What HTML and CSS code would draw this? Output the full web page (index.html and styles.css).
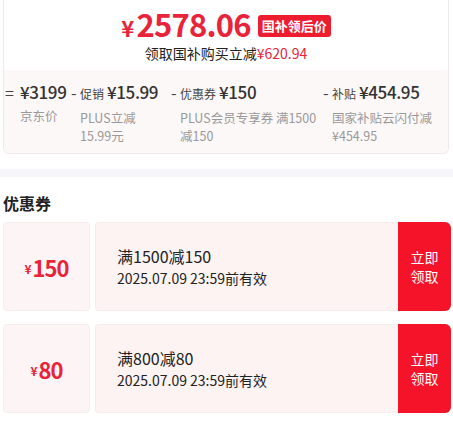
FILE: index.html
```html
<!DOCTYPE html>
<html lang="zh-CN">
<head>
  <meta charset="UTF-8" />
  <meta name="viewport" content="width=device-width, initial-scale=1" />
  <title>优惠券</title>
  <link rel="stylesheet" href="styles.css">
</head>
<body>

<div class="price-card">
  <div class="price-main">
    <span class="price-now"><span class="yen">¥</span>2578.06</span>
    <span class="price-tag">国补领后价</span>
  </div>
  <div class="price-save">领取国补购买立减<span class="red">¥620.94</span></div>

  <div class="breakdown">
    <div class="bd-item bd-1">
      <span class="bd-sign">=</span>
      <div class="bd-body">
        <div class="bd-top"><span class="bd-num">¥3199</span></div>
        <div class="bd-desc">京东价</div>
      </div>
    </div>
    <div class="bd-item bd-2">
      <span class="bd-sign">-</span>
      <div class="bd-body">
        <div class="bd-top"><span class="bd-label">促销</span><span class="bd-num">¥15.99</span></div>
        <div class="bd-desc">PLUS立减<br>15.99元</div>
      </div>
    </div>
    <div class="bd-item bd-3">
      <span class="bd-sign">-</span>
      <div class="bd-body">
        <div class="bd-top"><span class="bd-label">优惠券</span><span class="bd-num">¥150</span></div>
        <div class="bd-desc">PLUS会员专享券 满1500<br>减150</div>
      </div>
    </div>
    <div class="bd-item bd-4">
      <span class="bd-sign">-</span>
      <div class="bd-body">
        <div class="bd-top"><span class="bd-label">补贴</span><span class="bd-num">¥454.95</span></div>
        <div class="bd-desc">国家补贴云闪付减<br>¥454.95</div>
      </div>
    </div>
  </div>
</div>

<div class="band"></div>

<h3 class="section-title">优惠券</h3>

<div class="coupon">
  <div class="coupon-amount"><span class="yen">¥</span>150</div>
  <div class="coupon-info">
    <div class="coupon-rule">满1500减150</div>
    <div class="coupon-date">2025.07.09 23:59前有效</div>
  </div>
  <div class="coupon-btn">立即<br>领取</div>
</div>

<div class="coupon">
  <div class="coupon-amount"><span class="yen">¥</span>80</div>
  <div class="coupon-info">
    <div class="coupon-rule">满800减80</div>
    <div class="coupon-date">2025.07.09 23:59前有效</div>
  </div>
  <div class="coupon-btn">立即<br>领取</div>
</div>

</body>
</html>
```

FILE: styles.css
```css
body {
  margin: 0;
  background: #fff;
  color: #222;
  font-family: "Noto Sans CJK SC", "Noto Sans", sans-serif;
}
.red {
  color: #e8233a;
}

/* price card */
.price-card {
  margin: 0 4px 0 3px;
  border: 1px solid #f0e8ec;
  border-top: none;
  border-radius: 0 0 6px 6px;
  padding: 8px 0 0;
}
.price-main {
  display: flex;
  justify-content: center;
  align-items: center;
  gap: 7px;
  height: 32px;
}
.price-now {
  display: flex;
  align-items: baseline;
  color: #e8233a;
  font-size: 31px;
  font-weight: 700;
  letter-spacing: -0.8px;
  line-height: 32px;
}
.price-now .yen {
  font-size: 22px;
  line-height: 22px;
  margin-right: 3px;
}
.price-tag {
  background: #ee1c2f;
  color: #fff;
  font-size: 13px;
  font-weight: 700;
  line-height: 22px;
  padding: 0 4px;
  border-radius: 3px;
  margin-top: 3px;
}
.price-save {
  text-align: center;
  font-size: 14px;
  line-height: 20px;
  margin-top: 3px;
  color: #222;
}
.breakdown {
  margin-top: 7px;
  background: #fdf8f8;
  border-radius: 0 0 6px 6px;
  display: flex;
  padding: 10px 0 12px 1px;
  height: 61px;
}
.bd-item {
  display: flex;
}
.bd-1 { width: 66px; }
.bd-2 { width: 100px; }
.bd-3 { width: 152px; }
.bd-4 { flex: 1; }
.bd-sign {
  width: 9px;
  font-size: 16px;
  line-height: 24px;
  color: #444;
}
.bd-1 .bd-sign { width: 15px; }
.bd-top {
  display: flex;
  align-items: baseline;
  gap: 3px;
  line-height: 24px;
  white-space: nowrap;
}
.bd-label {
  font-size: 12px;
  color: #444;
}
.bd-num {
  font-size: 17px;
  font-weight: 500;
  letter-spacing: -0.4px;
  color: #333;
}
.bd-desc {
  font-size: 12.5px;
  line-height: 18px;
  color: #999;
  margin-top: 3px;
  white-space: nowrap;
}

.band {
  height: 8px;
  background: #f6f6fa;
  margin-top: 15px;
}

.section-title {
  margin: 15px 0 0 3px;
  font-size: 16px;
  font-weight: 700;
  line-height: 22px;
  color: #222;
}

/* coupons */
.coupon {
  display: flex;
  height: 89px;
  margin: 8px 2px 13px 3px;
}
.coupon + .coupon {
  margin-top: 0;
}
.coupon-amount {
  width: 87px;
  background: #fdf5f5;
  border: 1px solid #f6ecec;
  box-sizing: border-box;
  border-radius: 4px;
  display: flex;
  justify-content: center;
  align-items: center;
  color: #e8233a;
  font-size: 22px;
  font-weight: 700;
  letter-spacing: -1px;
}
.coupon-amount .yen {
  font-size: 12px;
  margin-top: 4px;
  margin-right: 2px;
}
.coupon-info {
  flex: 1;
  margin-left: 5px;
  background: #fdf3f3;
  border: 1px solid #f6ecec;
  border-right: none;
  border-radius: 4px 0 0 4px;
  display: flex;
  flex-direction: column;
  justify-content: center;
  padding-left: 21px;
}
.coupon-rule {
  font-size: 16px;
  line-height: 22px;
}
.coupon-date {
  font-size: 14px;
  line-height: 22px;
}
.coupon-btn {
  width: 53px;
  background: #f5132a;
  color: #fff;
  border-radius: 0 6px 6px 0;
  display: flex;
  align-items: center;
  justify-content: center;
  text-align: center;
  font-size: 14px;
  line-height: 19px;
}
```
